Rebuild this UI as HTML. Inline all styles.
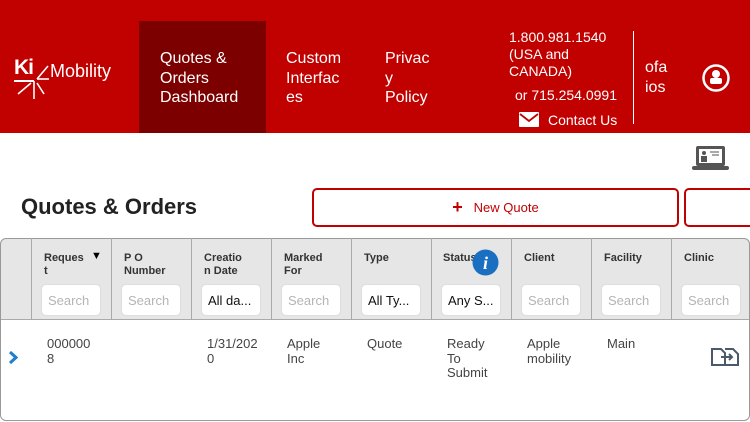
<!DOCTYPE html>
<html><head><style>
*{margin:0;padding:0;box-sizing:border-box}
body{width:750px;height:422px;overflow:hidden;background:#fff;font-family:"Liberation Sans",sans-serif;position:relative}
.hdr{position:absolute;left:0;top:0;width:750px;height:133px;background:#c10000;color:#fff}
.a{position:absolute;font-size:16px;line-height:19.5px;color:#fff}
.tab{position:absolute;left:139px;top:21px;width:127px;height:112px;background:#7c0000}
.th{position:absolute;top:238px;left:0;width:750px;height:82px;background:#e6e6e6;border:1px solid #999;border-radius:6px 6px 0 0;border-bottom:1px solid #aaa}
.tb{position:absolute;top:319px;left:0;width:750px;height:102px;border:1px solid #999;border-top:none;border-radius:0 0 6px 6px}
.vl{position:absolute;top:238px;width:1px;height:82px;background:#aaa}
.hl{position:absolute;top:252px;font-size:11px;font-weight:bold;color:#333;line-height:12.5px}
.in{position:absolute;top:284px;width:60px;height:32px;background:#fff;border:1px solid #ddd;border-radius:5px;font-size:13px;color:#b5b5b5;padding:8px 0 0 6px}
.in.d{color:#111}
.c{position:absolute;top:337px;font-size:13px;color:#444;line-height:14.5px}
</style></head><body>
<div class="hdr">
<div class="tab"></div>
<div class="a" style="left:14px;top:58px;font-size:21px;font-weight:bold;letter-spacing:-1px">Ki</div>
<div style="position:absolute;left:14px;top:80px;width:20px;height:1.5px;background:#fff"></div>
<div class="a" style="left:50px;top:62px;font-size:18px">Mobility</div>
<svg style="position:absolute;left:12px;top:62px" width="40" height="40"><g stroke="#fff" stroke-width="1.6"><line x1="36" y1="4" x2="25" y2="17"/><line x1="37" y1="17" x2="25" y2="17"/><line x1="22" y1="19" x2="22" y2="37"/><line x1="19" y1="21" x2="6" y2="32"/><line x1="25" y1="21" x2="32" y2="32"/><line x1="18" y1="19" x2="8" y2="19"/></g></svg>
<div class="a" style="left:160px;top:49px">Quotes &amp;<br>Orders<br>Dashboard</div>
<div class="a" style="left:286px;top:49px">Custom<br>Interfac<br>es</div>
<div class="a" style="left:385px;top:49px">Privac<br>y<br>Policy</div>
<div class="a" style="left:509px;top:29px;font-size:14px;line-height:17px">1.800.981.1540<br>(USA and<br>CANADA)</div>
<div class="a" style="left:515px;top:86px;font-size:14px">or 715.254.0991</div>
<svg style="position:absolute;left:519px;top:112px" width="20" height="15"><rect width="20" height="15" rx="1" fill="#fff"/><path d="M1 2 L10 9 L19 2" stroke="#c10000" stroke-width="1.8" fill="none"/></svg>
<div class="a" style="left:548px;top:111px;font-size:14px">Contact Us</div>
<div style="position:absolute;left:633px;top:31px;width:1px;height:93px;background:#fff"></div>
<div class="a" style="left:645px;top:58px">ofa<br>ios</div>
<svg style="position:absolute;left:701px;top:63px" width="30" height="30"><circle cx="15" cy="15" r="12.5" stroke="#fff" stroke-width="2.5" fill="none"/><circle cx="15" cy="11" r="4" fill="#fff"/><rect x="9" y="15" width="12" height="6" rx="2" fill="#fff"/></svg>
</div>
<svg style="position:absolute;left:692px;top:145px" width="38" height="27"><rect x="4" y="1" width="29" height="20" rx="2" fill="#555"/><rect x="7" y="4" width="23" height="14" fill="#fff"/><circle cx="12" cy="8" r="2" fill="#555"/><rect x="9" y="11" width="6" height="6" fill="#555"/><line x1="18" y1="7" x2="27" y2="7" stroke="#555"/><line x1="20" y1="10" x2="27" y2="10" stroke="#555"/><rect x="0" y="21" width="37" height="4" rx="2" fill="#555"/></svg>
<div style="position:absolute;left:21px;top:194px;font-size:22px;font-weight:bold;color:#222">Quotes &amp; Orders</div>
<div style="position:absolute;left:312px;top:188px;width:367px;height:39px;border:2px solid #c10000;border-radius:5px;color:#c10000;font-size:13px;text-align:center;line-height:35px"><b style="font-size:18px;vertical-align:-1px">+</b>&nbsp;&nbsp; New Quote</div>
<div style="position:absolute;left:684px;top:188px;width:90px;height:39px;border:2px solid #c10000;border-radius:5px"></div>
<div class="th"></div><div class="tb"></div>
<div class="vl" style="left:31px"></div><div class="vl" style="left:111px"></div><div class="vl" style="left:191px"></div><div class="vl" style="left:271px"></div><div class="vl" style="left:351px"></div><div class="vl" style="left:431px"></div><div class="vl" style="left:511px"></div><div class="vl" style="left:591px"></div><div class="vl" style="left:671px"></div>
<div class="hl" style="left:44px">Reques<br>t</div><div style="position:absolute;left:91px;top:250px;font-size:11px">▼</div>
<div class="hl" style="left:124px">P O<br>Number</div>
<div class="hl" style="left:204px">Creatio<br>n Date</div>
<div class="hl" style="left:284px">Marked<br>For</div>
<div class="hl" style="left:364px">Type</div>
<div class="hl" style="left:443px">Status</div>
<svg style="position:absolute;left:472px;top:249px" width="27" height="27"><circle cx="13.5" cy="13.5" r="13" fill="#1b6fc0"/><text x="13.5" y="20" text-anchor="middle" font-family="Liberation Serif" font-style="italic" font-weight="bold" font-size="18" fill="#fff">i</text></svg>
<div class="hl" style="left:524px">Client</div>
<div class="hl" style="left:604px">Facility</div>
<div class="hl" style="left:684px">Clinic</div>
<div class="in" style="left:41px">Search</div><div class="in" style="left:121px">Search</div><div class="in d" style="left:201px">All da...</div><div class="in" style="left:281px">Search</div><div class="in d" style="left:361px">All Ty...</div><div class="in d" style="left:441px">Any S...</div><div class="in" style="left:521px">Search</div><div class="in" style="left:601px">Search</div><div class="in" style="left:681px">Search</div>
<svg style="position:absolute;left:8px;top:351px" width="10" height="13"><path d="M2 1 L8 6.5 L2 12" stroke="#1d7fd0" stroke-width="3" fill="none"/></svg>
<div class="c" style="left:47px">000000<br>8</div>
<div class="c" style="left:207px">1/31/202<br>0</div>
<div class="c" style="left:287px">Apple<br>Inc</div>
<div class="c" style="left:367px">Quote</div>
<div class="c" style="left:447px">Ready<br>To<br>Submit</div>
<div class="c" style="left:527px">Apple<br>mobility</div>
<div class="c" style="left:607px">Main</div>
<svg style="position:absolute;left:710px;top:347px" width="30" height="20"><path d="M2 2 H11 L15 6 V18 H2 Z M15 2 H23 L28 7 V18 H15" stroke="#4a5a6a" stroke-width="2" fill="none"/><path d="M11 10 H22 M19 7 L22 10 L19 13" stroke="#4a5a6a" stroke-width="2" fill="none"/></svg>
</body></html>
